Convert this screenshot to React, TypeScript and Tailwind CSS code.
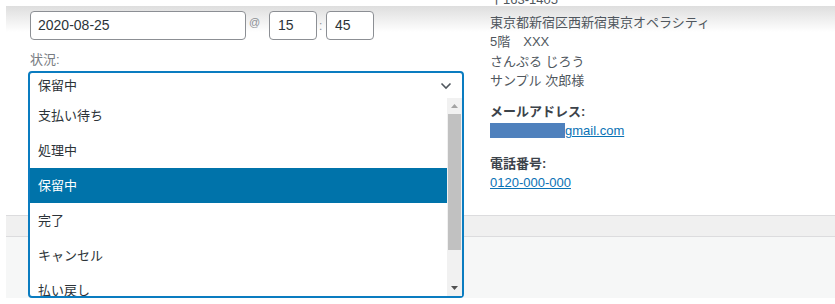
import React from 'react';

const font = "font-['Liberation_Sans','Noto_Sans_CJK_JP',sans-serif]";

const options = ['支払い待ち', '処理中', '保留中', '完了', 'キャンセル', '払い戻し'];

const Chevron = () => (
  <svg width="12" height="8" viewBox="0 0 12 8" fill="none">
    <path d="M1.5 1.5 L6 6 L10.5 1.5" stroke="#50575e" strokeWidth="1.6" />
  </svg>
);

const StatusSelect = ({ value }: { value: string }) => (
  <div className="relative h-[30px]">
    <div className="absolute left-[-2px] top-0 z-10 w-[436px] rounded-[4px] border-2 border-[#0a7cc0] bg-white">
      <div className="flex h-[25px] items-center justify-between pl-[8px] pr-[10px] text-[13px] text-[#2c3338]">
        <span>{value}</span>
        <Chevron />
      </div>
      <div className="flex h-[198px]">
        <ul className="flex-1 overflow-hidden">
          {options.map((o) => (
            <li
              key={o}
              className={
                o === value
                  ? 'flex h-[35px] items-center bg-[#0073aa] pl-[8px] text-[13px] text-white'
                  : 'flex h-[35px] items-center pl-[8px] text-[13px] text-[#2c3338]'
              }
            >
              {o}
            </li>
          ))}
        </ul>
        {/* scrollbar */}
        <div className="flex w-[15px] flex-col items-center bg-[#f1f1f1]">
          <div className="flex h-[16px] items-center justify-center">
            <svg width="7" height="4" viewBox="0 0 7 4"><path d="M0 4 L3.5 0 L7 4 Z" fill="#a3a3a3" /></svg>
          </div>
          <div className="h-[136px] w-[13px] bg-[#c1c1c1]" />
          <div className="flex-1" />
          <div className="flex h-[16px] items-center justify-center">
            <svg width="7" height="4" viewBox="0 0 7 4"><path d="M0 0 L3.5 4 L7 0 Z" fill="#505050" /></svg>
          </div>
        </div>
      </div>
    </div>
  </div>
);

export default function App() {
  return (
    <div className={`h-[304px] w-[835px] overflow-hidden bg-white py-[6px] pl-[6px] ${font}`}>
      <div className="flex h-full flex-col bg-[linear-gradient(to_bottom,#dedede_0px,#ffffff_26px)]">
        <div className="flex h-[209px]">
          {/* left column */}
          <div className="w-[484px] pl-[24px] pt-[5px]">
            <div className="flex h-[29px] items-center">
              <div className="flex h-[29px] w-[216px] items-center rounded-[4px] border border-[#8c8f94] bg-white px-[7px] text-[14px] text-[#2c3338]">
                2020-08-25
              </div>
              <span className="mb-[7px] w-[23px] pl-[3px] text-[11px] text-[#8c8f94]">@</span>
              <div className="flex h-[29px] w-[48px] items-center rounded-[4px] border border-[#8c8f94] bg-white px-[8px] text-[14px] text-[#2c3338]">
                15
              </div>
              <span className="w-[9px] pl-[2px] text-[12px] text-[#8c8f94]">:</span>
              <div className="flex h-[29px] w-[48px] items-center rounded-[4px] border border-[#8c8f94] bg-white px-[8px] text-[14px] text-[#2c3338]">
                45
              </div>
            </div>
            <div className="mt-[11px] text-[13px] leading-[18px] text-[#787c82]">状況:</div>
            <div className="mt-[2px]">
              <StatusSelect value="保留中" />
            </div>
          </div>

          {/* right column */}
          <div className="-mt-[13px] text-[13px] leading-[19.5px] text-[#50575e]">
            <p className="-mt-[3px] mb-[3px]">〒163-1405</p>
            <p>東京都新宿区西新宿東京オペラシティ</p>
            <p>5階　XXX</p>
            <p>さんぷる じろう</p>
            <p>サンプル 次郎様</p>
            <p className="mt-[11px] font-bold text-[#3c434a]">メールアドレス:</p>
            <p className="flex items-center">
              <span className="inline-block h-[15px] w-[75px] bg-[#4f81bd]" />
              <a className="text-[#0a72b5] underline">gmail.com</a>
            </p>
            <p className="mt-[13px] font-bold text-[#3c434a]">電話番号:</p>
            <p>
              <a className="text-[#0a72b5] underline">0120-000-000</a>
            </p>
          </div>
        </div>

        {/* lower bar */}
        <div className="h-[22px] border-y border-[#dcdcde] bg-[#f0f0f0]" />
        <div className="flex-1 bg-[#f6f7f7]" />
      </div>
    </div>
  );
}
